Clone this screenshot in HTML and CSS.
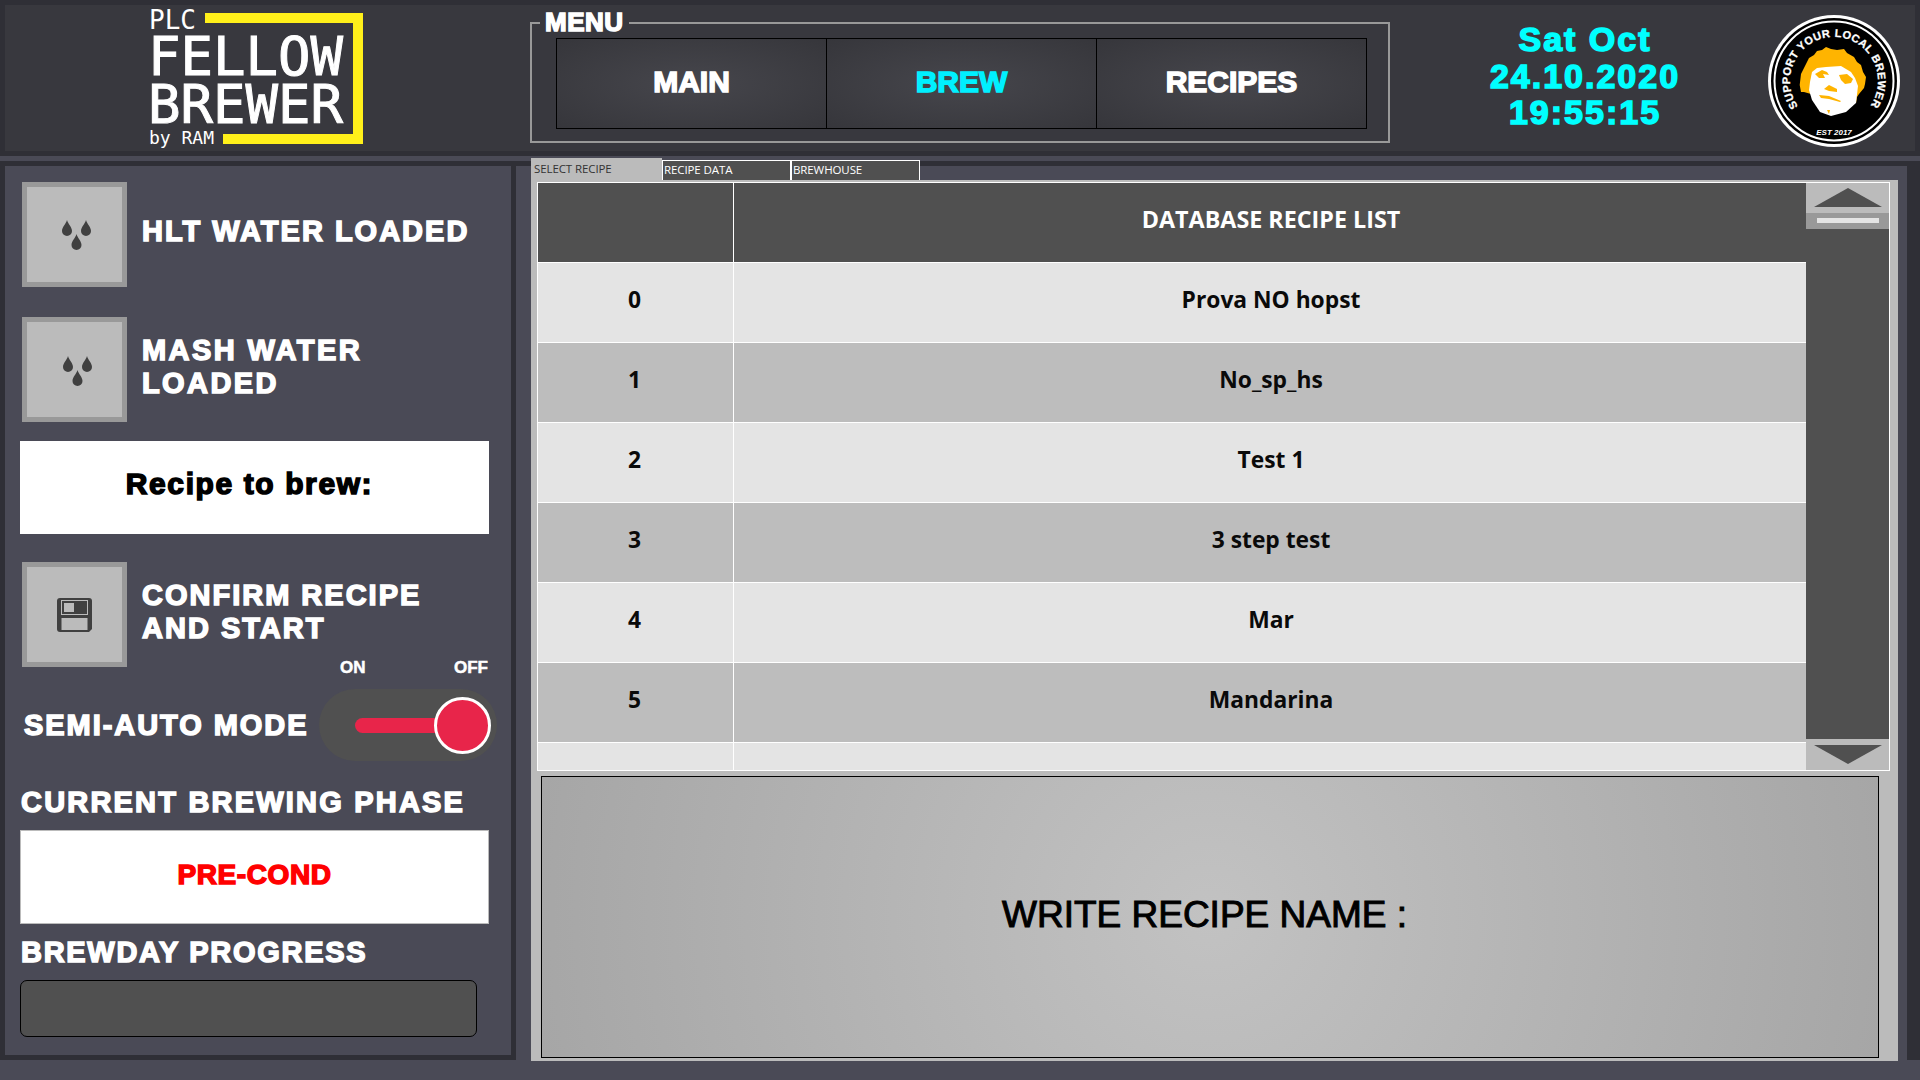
FILE: index.html
```html
<!DOCTYPE html>
<html lang="en">
<head>
    <meta charset="utf-8">
    <title>PLC Fellow Brewer</title>
    <link rel="stylesheet" href="styles.css">
</head>
<body>
    <header class="top-bar">
        <svg class="logo" width="220" height="146" viewBox="0 0 220 146">
            <path class="logo-frame" d="M60 8H218V139H78V129H208V18H60Z"/>
            <text class="logo-small" x="4" y="24">PLC</text>
            <text class="logo-big" x="3" y="70">FELLOW</text>
            <text class="logo-big" x="3" y="118">BREWER</text>
            <text class="logo-tiny" x="4" y="139">by RAM</text>
        </svg>

        <div class="menu-box">
            <span class="menu-title">MENU</span>
            <nav class="menu-nav">
                <a class="menu-btn">MAIN</a>
                <a class="menu-btn menu-btn-active">BREW</a>
                <a class="menu-btn">RECIPES</a>
            </nav>
        </div>

        <div class="clock">Sat Oct<br>24.10.2020<br>19:55:15</div>

        <svg class="badge" width="134" height="134" viewBox="0 0 134 134">
            <circle cx="67" cy="67" r="66" fill="#fff"/>
            <circle cx="67" cy="67" r="63" fill="#000"/>
            <circle cx="67" cy="67" r="59.5" fill="none" stroke="#fff" stroke-width="2"/>
            <path id="badge-arc" fill="none" d="M31.1 92.4A44 44 0 1 1 103.500 91.500"/>
            <text class="badge-text"><textPath href="#badge-arc" textLength="191">SUPPORT YOUR LOCAL BREWER</textPath></text>
            <text class="badge-est" x="67" y="121">EST 2017</text>
            <path fill="#ffb400" d="M32.7 71L34 60L38 52L42 44L47 41L50 37L55 36L59 33L64 35L70 36L77 35L80 39L87 43L90 48L94 51L96 58L99 63L98 70L97 74L92 80L90 83L89 89L85 75L48 82L44 80L37 78L34 78Z"/>
            <path fill="#fff" d="M43 68L45 58L50 54L59 53L74 52L84 58L88 64L91 72L89 89L79 98L64 102L53 98L45 86L42 76Z"/>
            <g fill="#ffb400">
                <path d="M48 60L55 56L60 58L62 61L56 60L58 64L52 64L50 62Z"/>
                <path d="M72 61L80 60L86 65L84 69L78 70L74 66Z"/>
                <path d="M57 75L62 71L70 75L70 78L62 77Z"/>
                <path d="M52 81L62 82L74 87L73 88L62 85L54 84Z"/>
                <path d="M60 96L63 96L62 100Z"/>
            </g>
        </svg>
    </header>

    <main class="main">
        <aside class="side-panel">
            <div class="action-row">
                <button class="icon-btn icon-btn-hlt">
                    <svg width="29" height="30" viewBox="0 0 29 30">
                        <path class="icon-fill" d="M5 0C6 4 10 7 10 11A5 5 0 0 1 0 11C0 7 4 4 5 0Z"/>
                        <path class="icon-fill" d="M24 0C25 4 29 7 29 11A5 5 0 0 1 19 11C19 7 23 4 24 0Z"/>
                        <path class="icon-fill" d="M14.5 14C15.500 18 19.500 21 19.500 25A5 5 0 0 1 9.500 25C9.500 21 13.500 18 14.500 14Z"/>
                    </svg>
                </button>
                <span class="action-label">HLT WATER LOADED</span>
            </div>
            <div class="action-row action-row-next">
                <button class="icon-btn icon-btn-mash">
                    <svg width="29" height="30" viewBox="0 0 29 30">
                        <path class="icon-fill" d="M5 0C6 4 10 7 10 11A5 5 0 0 1 0 11C0 7 4 4 5 0Z"/>
                        <path class="icon-fill" d="M24 0C25 4 29 7 29 11A5 5 0 0 1 19 11C19 7 23 4 24 0Z"/>
                        <path class="icon-fill" d="M14.5 14C15.500 18 19.500 21 19.500 25A5 5 0 0 1 9.500 25C9.500 21 13.500 18 14.500 14Z"/>
                    </svg>
                </button>
                <span class="action-label action-label-wide">MASH WATER<br>LOADED</span>
            </div>

            <div class="recipe-box">Recipe to brew:</div>

            <div class="action-row action-row-confirm">
                <button class="icon-btn">
                    <svg width="35" height="34" viewBox="0 0 35 34">
                        <path class="icon-fill" d="M3 0H32A3 3 0 0 1 35 3V31L32 34H3A3 3 0 0 1 0 31V3A3 3 0 0 1 3 0Z"/>
                        <rect x="4.500" y="2.500" width="26" height="14" fill="none" stroke="#bbb"/>
                        <rect x="7" y="5" width="10" height="9" fill="#bbb"/>
                        <rect x="4.500" y="20" width="26" height="12" fill="#bbb"/>
                    </svg>
                </button>
                <span class="action-label">CONFIRM RECIPE<br>AND START</span>
            </div>

            <div class="switch-labels"><span>ON</span><span>OFF</span></div>
            <div class="mode-row">
                <span class="mode-label">SEMI-AUTO MODE</span>
                <div class="switch">
                    <div class="switch-track"></div>
                    <div class="switch-knob"></div>
                </div>
            </div>

            <h2 class="side-heading side-heading-phase">CURRENT BREWING PHASE</h2>
            <div class="phase-box">PRE-COND</div>
            <h2 class="side-heading">BREWDAY PROGRESS</h2>
            <div class="progress-box"></div>
        </aside>

        <section class="work-panel">
            <div class="tabs">
                <div class="tab tab-active">SELECT RECIPE</div>
                <div class="tab">RECIPE DATA</div>
                <div class="tab">BREWHOUSE</div>
            </div>
            <div class="tab-page">
                <div class="recipe-grid">
                    <div class="grid-rows">
                        <div class="grid-row grid-head"><div></div><div>DATABASE RECIPE LIST</div></div>
                        <div class="grid-row row-light"><div>0</div><div>Prova NO hopst</div></div>
                        <div class="grid-row row-dark"><div>1</div><div>No_sp_hs</div></div>
                        <div class="grid-row row-light"><div>2</div><div>Test 1</div></div>
                        <div class="grid-row row-dark"><div>3</div><div>3 step test</div></div>
                        <div class="grid-row row-light"><div>4</div><div>Mar</div></div>
                        <div class="grid-row row-dark"><div>5</div><div>Mandarina</div></div>
                        <div class="grid-row row-light row-cut"><div></div><div></div></div>
                    </div>
                    <div class="scroll">
                        <div class="scroll-btn">
                            <svg width="68" height="19" viewBox="0 0 68 19"><path d="M0 19L34 0L68 19Z" fill="#505050"/></svg>
                        </div>
                        <div class="scroll-thumb"><div class="scroll-grip"></div></div>
                        <div class="scroll-track"></div>
                        <div class="scroll-btn scroll-btn-down">
                            <svg width="68" height="19" viewBox="0 0 68 19"><path d="M0 0L34 19L68 0Z" fill="#505050"/></svg>
                        </div>
                    </div>
                </div>
                <div class="name-box">WRITE RECIPE NAME :</div>
            </div>
        </section>
    </main>
</body>
</html>
```

FILE: styles.css
```css
* {
    box-sizing: border-box;
}

body {
    margin: 0;
    width: 1920px;
    height: 1080px;
    overflow: hidden;
    background-color: #4a4a56;
    font-family: "Liberation Sans", Arial, sans-serif;
    color: #fff;
}

/* heavy look of the original font */
.menu-title,
.menu-btn,
.clock,
.action-label,
.recipe-box,
.switch-labels,
.mode-label,
.side-heading,
.phase-box {
    font-weight: 700;
    -webkit-text-stroke: 1.5px currentColor;
}

/* top bar */
.top-bar {
    display: flex;
    height: 156px;
    margin-bottom: 5px;
    border: 5px solid #2f2f36;
    background-color: #38383e;
}

.logo {
    flex: none;
    margin-left: 140px;
}

.logo-frame {
    fill: #fff01a;
}

.logo text {
    fill: #fff;
    font-family: "DejaVu Sans Mono", monospace;
}

.logo-small {
    font-size: 26px;
}

.logo-big {
    font-size: 54px;
    stroke: #fff;
    stroke-width: 1px;
}

.logo-tiny {
    font-size: 18px;
}

.menu-box {
    position: relative;
    flex: none;
    width: 860px;
    height: 121px;
    margin: 17px 10px 0 165px;
    padding: 14px 0 0 24px;
    border: 2px solid #999;
}

.menu-title {
    position: absolute;
    top: -17px;
    left: 8px;
    padding: 0 5px;
    background-color: #38383e;
    font-size: 26px;
    line-height: 30px;
    letter-spacing: 0.5px;
}

.menu-nav {
    display: flex;
    width: 811px;
    height: 91px;
    border: 1px solid #000;
}

.menu-btn {
    display: flex;
    flex: 1;
    align-items: center;
    justify-content: center;
    padding-bottom: 4px;
    background: radial-gradient(ellipse at center, #46464c 0%, #36363b 100%);
    font-size: 30px;
}

.menu-btn + .menu-btn {
    border-left: 1px solid #000;
}

.menu-btn-active {
    color: #00f0ff;
}

.clock {
    flex: none;
    width: 370px;
    margin-top: 16px;
    color: #0ff;
    font-size: 34px;
    line-height: 36.5px;
    letter-spacing: 2px;
    text-align: center;
}

.badge {
    flex: none;
    margin-top: 9px;
    margin-left: -3px;
}

.badge-text {
    fill: #fff;
    stroke: #fff;
    stroke-width: 0.3px;
    font-size: 11px;
    font-weight: 700;
}

.badge-est {
    fill: #fff;
    font-size: 8px;
    font-weight: 700;
    font-style: italic;
    text-anchor: middle;
}

/* layout below the bar */
.main {
    display: flex;
    height: 899px;
}

.side-panel {
    flex: none;
    width: 516px;
    padding: 16px 0 0 15px;
    border: 5px solid #2f2f36;
    background-color: #4a4a56;
}

.action-row {
    display: flex;
    align-items: center;
    gap: 15px;
    margin-left: 2px;
}

.action-row-next {
    margin-top: 30px;
}

.action-row-confirm {
    margin-top: 28px;
}

.icon-btn {
    display: flex;
    flex: none;
    align-items: center;
    justify-content: center;
    width: 105px;
    height: 105px;
    padding: 0;
    border: 5px solid #999;
    background-color: #bbb;
}

.icon-btn-hlt {
    padding-left: 3px;
}

.icon-btn-mash {
    padding: 3px 0 0 6px;
}

.icon-fill {
    fill: #404040;
}

.action-label {
    padding-bottom: 6px;
    font-size: 29px;
    line-height: 33px;
    letter-spacing: 2px;
    white-space: nowrap;
}

.action-label-wide {
    letter-spacing: 2.400px;
}

.recipe-box {
    display: flex;
    align-items: center;
    justify-content: center;
    width: 469px;
    height: 93px;
    margin-top: 19px;
    padding: 0 10px 7px 0;
    background-color: #fff;
    color: #000;
    font-size: 30px;
    letter-spacing: 1.6px;
}

.switch-labels {
    display: flex;
    justify-content: space-between;
    width: 468px;
    height: 20px;
    margin-top: -9px;
    padding-left: 320px;
    font-size: 17px;
    line-height: 20px;
    -webkit-text-stroke-width: 0.5px;
}

.mode-row {
    display: flex;
    align-items: center;
    margin-top: 11px;
    margin-left: 4px;
}

.mode-label {
    width: 295px;
    font-size: 29px;
    letter-spacing: 1.950px;
    white-space: nowrap;
}

.switch {
    position: relative;
    width: 178px;
    height: 72px;
    border-radius: 36px;
    background-color: #505050;
}

.switch-track {
    position: absolute;
    top: 29px;
    left: 36px;
    width: 90px;
    height: 15px;
    border-radius: 8px;
    background-color: #e8254a;
}

.switch-knob {
    position: absolute;
    top: 8px;
    left: 115px;
    width: 57px;
    height: 57px;
    border: 3px solid #fff;
    border-radius: 50%;
    background-color: #e8254a;
}

.side-heading {
    height: 36px;
    margin: 10px 0 0 1px;
    font-size: 29px;
    line-height: 36px;
    letter-spacing: 1.700px;
    white-space: nowrap;
}

.mode-row + .side-heading {
    margin-top: 23px;
}

.side-heading-phase {
    letter-spacing: 2.200px;
}

.phase-box {
    display: flex;
    align-items: center;
    justify-content: center;
    width: 469px;
    height: 94px;
    margin-top: 10px;
    padding-bottom: 4px;
    border: 1px solid #bbb;
    background-color: #fff;
    color: #f00;
    font-size: 28px;
    letter-spacing: 0.6px;
}

.progress-box {
    width: 457px;
    height: 57px;
    margin-top: 10px;
    border: 1px solid #000;
    border-radius: 7px;
    background-color: #505050;
}

/* recipe tabs */
.work-panel {
    flex: none;
    width: 1404px;
    height: 899px;
    padding: 0 9px 0 15px;
    border-top: 5px solid #2f2f36;
    border-right: 13px solid #2f2f36;
    background-color: #4a4a56;
}

.tabs {
    display: flex;
    align-items: flex-end;
    height: 22px;
    margin-top: -8px;
}

.tab {
    width: 129px;
    height: 20px;
    padding-left: 1px;
    border: 1px solid #fff;
    border-bottom: 0;
    background-color: #505050;
    font-family: "Open Sans", sans-serif;
    font-size: 11.500px;
    line-height: 17px;
    letter-spacing: -0.1px;
}

.tab-active {
    width: 131px;
    height: 22px;
    padding-left: 3px;
    border: 0;
    background-color: #bbb;
    color: #333;
    line-height: 22px;
}

.tab-page {
    height: 881px;
    padding: 2px 8px 0 6px;
    background-color: #bbb;
}

.recipe-grid {
    display: flex;
    height: 589px;
    border: 1px solid #fff;
}

.grid-rows {
    flex: 1;
    overflow: hidden;
}

.grid-row {
    display: grid;
    grid-template-columns: 196px 1fr;
    height: 80px;
    border-bottom: 1px solid #fff;
    color: #0a0a0a;
    font-family: "Open Sans", sans-serif;
    font-size: 22.800px;
    font-weight: 700;
}

.grid-row > div {
    display: flex;
    align-items: center;
    justify-content: center;
    padding: 0 0 6px 2px;
}

.grid-row > div:first-child {
    border-right: 1px solid #fff;
    padding: 0 2px 6px 0;
}

.grid-head {
    background-color: #505050;
    color: #fff;
    font-size: 23.300px;
}

.grid-head > div {
    padding-bottom: 8px;
}

.row-light {
    background-color: #e4e4e4;
}

.row-dark {
    background-color: #bdbdbd;
}

.row-cut {
    height: 27px;
    border-bottom: 0;
}

.scroll {
    display: flex;
    flex: none;
    flex-direction: column;
    width: 83px;
    background-color: #505050;
}

.scroll-btn {
    display: flex;
    justify-content: center;
    height: 30px;
    padding-top: 5px;
    background-color: #bbb;
}

.scroll-btn-down {
    height: 31px;
    padding-top: 6px;
}

.scroll-thumb {
    height: 16px;
    padding: 5px 10px 0 11px;
    background-color: #999;
}

.scroll-grip {
    height: 5px;
    background-color: #e4e4e4;
}

.scroll-track {
    flex: 1;
}

.name-box {
    display: flex;
    align-items: center;
    justify-content: center;
    width: 1338px;
    height: 282px;
    margin: 5px 0 0 4px;
    padding: 0 11px 4px 0;
    border: 1px solid #000;
    background: radial-gradient(circle at center, #c2c2c2 0%, #a6a6a6 100%);
    color: #000;
    font-size: 37px;
    -webkit-text-stroke: 1px #000;
}
```
